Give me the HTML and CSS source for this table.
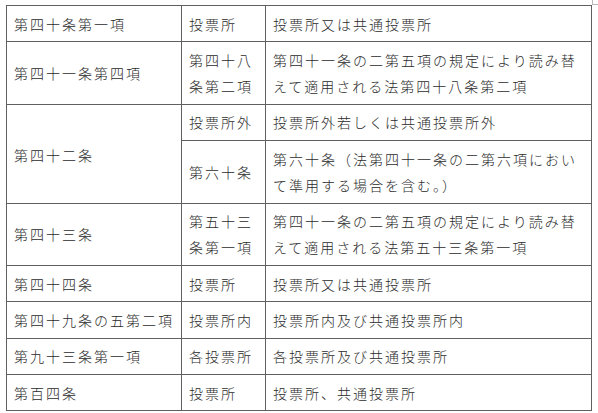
FILE: index.html
```html
<!DOCTYPE html>
<html lang="ja">
<head>
<meta charset="utf-8">
<link rel="stylesheet" href="styles.css">
</head>
<body>
<div class="page">
  <span class="corner-mark"></span>
  <table class="law-table">
    <colgroup>
      <col class="c1">
      <col class="c2">
      <col class="c3">
    </colgroup>
    <tbody>
      <tr><td>第四十条第一項</td><td>投票所</td><td>投票所又は共通投票所</td></tr>
      <tr><td>第四十一条第四項</td><td>第四十八条第二項</td><td>第四十一条の二第五項の規定により読み替えて適用される法第四十八条第二項</td></tr>
      <tr><td rowspan="2" class="mid">第四十二条</td><td>投票所外</td><td>投票所外若しくは共通投票所外</td></tr>
      <tr><td>第六十条</td><td>第六十条（法第四十一条の二第六項において準用する場合を含む。）</td></tr>
      <tr><td>第四十三条</td><td>第五十三条第一項</td><td>第四十一条の二第五項の規定により読み替えて適用される法第五十三条第一項</td></tr>
      <tr><td>第四十四条</td><td>投票所</td><td>投票所又は共通投票所</td></tr>
      <tr><td>第四十九条の五第二項</td><td>投票所内</td><td>投票所内及び共通投票所内</td></tr>
      <tr><td>第九十三条第一項</td><td>各投票所</td><td>各投票所及び共通投票所</td></tr>
      <tr><td>第百四条</td><td>投票所</td><td>投票所、共通投票所</td></tr>
    </tbody>
  </table>
</div>
</body>
</html>
```

FILE: styles.css
```css
html, body {
  margin: 0;
  padding: 0;
  background: #ffffff;
}

.page {
  position: relative;
  width: 598px;
  height: 413px;
  padding: 5px 0 0 6px;
  box-sizing: border-box;
}

.corner-mark {
  position: absolute;
  top: 0;
  left: 592px;
  width: 6px;
  height: 4px;
  border-left: 1px solid #b8b8b8;
  border-bottom: 1px solid #b8b8b8;
}

.law-table {
  border-collapse: collapse;
  table-layout: fixed;
  width: 585px;
  font-family: "Noto Sans CJK JP", "Noto Sans CJK SC", sans-serif;
  font-size: 14px;
  font-weight: 300;
  letter-spacing: 2px;
  line-height: 26px;
  color: #2b2b2b;
}

.c1 { width: 175px; }
.c2 { width: 84px; }
.c3 { width: 326px; }

.law-table td {
  border: 1px solid #606060;
  padding: 4.7px 4px 4.7px 7px;
  vertical-align: middle;
  word-break: break-all;
}

.law-table td.mid {
  padding-top: 8px;
}
```
